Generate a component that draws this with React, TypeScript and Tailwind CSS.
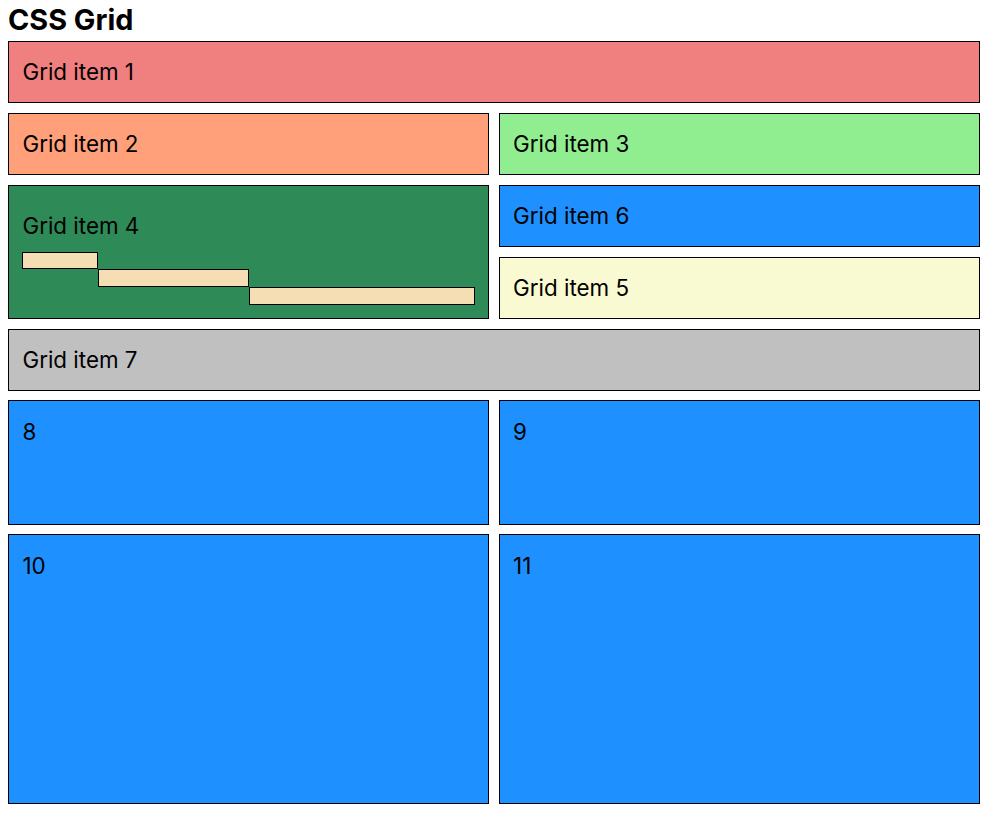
const box = 'border border-black px-[13.44px] py-[13.44px] text-[22.4px] leading-[1.5] text-black'

export default function App() {
  return (
    <div className="min-h-[818px] bg-white font-['Inter',sans-serif]">
      <div className="ml-[8px] w-[972px]">
        <h1 className="pt-[1.5px] mb-[3.5px] text-[28.8px] leading-[36px] font-bold text-black">CSS Grid</h1>
        <div className="grid grid-cols-2 gap-x-[9.3px] gap-y-[9.4px]">
          <div className={`${box} col-span-2 bg-[#f08080]`}>Grid item 1</div>
          <div className={`${box} bg-[#ffa07a]`}>Grid item 2</div>
          <div className={`${box} bg-[#90ee90]`}>Grid item 3</div>
          <div className={`${box} row-span-2 flex flex-col justify-end gap-[9.4px] bg-[#2e8b57]`}>
            <div>Grid item 4</div>
            <div className="grid grid-cols-[1fr_2fr_3fr]">
              <div className="col-start-1 row-start-1 h-[17.7px] border border-black bg-[#f5deb3]" />
              <div className="col-start-2 row-start-2 h-[17.7px] border border-black bg-[#f5deb3]" />
              <div className="col-start-3 row-start-3 h-[17.7px] border border-black bg-[#f5deb3]" />
            </div>
          </div>
          <div className={`${box} col-start-2 row-start-4 bg-[#fafad2]`}>Grid item 5</div>
          <div className={`${box} col-start-2 row-start-3 bg-[#1e90ff]`}>Grid item 6</div>
          <div className={`${box} col-span-2 bg-[#c0c0c0]`}>Grid item 7</div>
          <div className={`${box} h-[124.5px] bg-[#1e90ff]`}>8</div>
          <div className={`${box} h-[124.5px] bg-[#1e90ff]`}>9</div>
          <div className={`${box} h-[270px] bg-[#1e90ff]`}>10</div>
          <div className={`${box} h-[270px] bg-[#1e90ff]`}>11</div>
        </div>
      </div>
    </div>
  )
}
